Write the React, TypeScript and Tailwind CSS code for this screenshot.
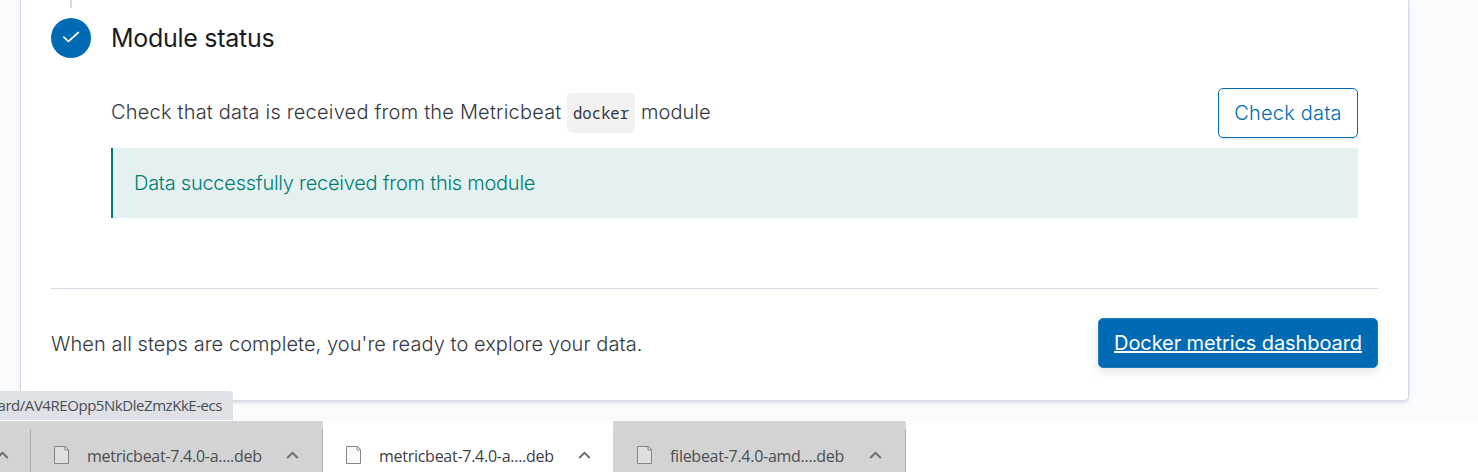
import React from "react";

const FileIcon = () => (
  <svg width="16" height="19" viewBox="0 0 16 19" className="shrink-0" fill="none">
    <path d="M.5.5H11.5L14.5 3.5V17.5H.5Z" fill="#eef2f5" fillOpacity=".4" stroke="#858585" />
    <path d="M11 .5V4H14.5" stroke="#858585" />
  </svg>
);

const Chevron = () => (
  <svg width="13" height="8" viewBox="0 0 13 8" className="shrink-0" fill="none">
    <path d="M1.2 7L6.5 1.8L11.8 7" stroke="#6b6e72" strokeWidth="2" />
  </svg>
);

function Download({ name, width, active = false }: { name: string; width: string; active?: boolean }) {
  return (
    <div className={`flex h-full shrink-0 flex-col ${width} ${active ? "bg-white" : "bg-[#d3d3d3]"}`}>
      <div className="h-2 w-full border-r border-[#dedede]" />
      <div className={`flex w-full flex-1 items-start border-r pl-[23px] ${active ? "border-[#d3d3d3]" : "border-[#adadad]"}`}>
        <div className="pt-[17px]"><FileIcon /></div>
        <div className={`ml-[17px] w-[178px] whitespace-nowrap pt-[16px] font-['Open_Sans',sans-serif] text-[16px] leading-[22px] tracking-[-0.27px] ${active ? "text-[#3c4043]" : "text-[#4b4e52]"}`}>{name}</div>
        <div className="ml-[21px] pt-[22px]"><Chevron /></div>
      </div>
    </div>
  );
}

export default function App() {
  return (
    <div className="flex h-[472px] w-[1478px] flex-col overflow-hidden bg-white font-['Inter',sans-serif] text-[20px] font-light leading-[30px] tracking-[0.06px] text-[#343741]">
      <main className="relative h-[421px] shrink-0 bg-[#fafbfd]">
        <section className="ml-5 flex h-[401px] w-[1389px] flex-col rounded-b-[5px] border border-t-0 border-[#d3dae6] bg-white px-[30px] shadow-[0_2px_3px_rgba(152,162,179,0.3)]">
          <div className="ml-[19px] h-2 w-[2px] shrink-0 bg-[#d3dae6]" />
          <div className="mt-[10px] flex h-10 shrink-0 items-center gap-5">
            <div className="flex size-10 items-center justify-center rounded-full bg-[#006bb4]">
              <svg width="20" height="20" viewBox="0 0 20 20" fill="none">
                <path d="M2.8 9.2L7.5 13.3L17.3 4.5" stroke="#fff" strokeWidth="1.7" strokeLinecap="round" strokeLinejoin="round" />
              </svg>
            </div>
            <h2 className="text-[25px] font-normal leading-10 tracking-[-0.28px] text-[#1a1c21]">Module status</h2>
          </div>
          <div className="ml-[60px] mt-[30px] flex h-[50px] w-[1247px] shrink-0 items-center justify-between">
            <div className="flex items-center whitespace-pre">
              <span className="-mt-[2px] w-[450px] tracking-[0.2px]">Check that data is received from the Metricbeat</span>
              <code className="ml-[6px] mr-[6px] flex h-10 w-[68px] items-center justify-center rounded-[5px] bg-[#f2f2f2] font-['Noto_Sans_Mono','DejaVu_Sans_Mono',monospace] text-[15.6px] font-normal tracking-normal">docker</code>
              <span className="-mt-[2px]">module</span>
            </div>
            <button className="h-[50px] w-[140px] rounded-[5px] border border-[#006bb4] tracking-[0.2px] text-[#006bb4] shadow-[0_2px_2px_-1px_rgba(152,162,179,0.3)]">Check data</button>
          </div>
          <div className="ml-[60px] mt-[10px] flex h-[70px] w-[1247px] shrink-0 items-center border-l-2 border-[#017d73] bg-[#e5f1f0] pl-[21px] tracking-[-0.25px] text-[#017d73]">
            Data successfully received from this module
          </div>
          <div className="mt-[70px] h-px shrink-0 bg-[#d3dae6]" />
          <div className="mt-[29px] flex h-[50px] shrink-0 items-center justify-between">
            <span className="pt-[2px]">When all steps are complete, you're ready to explore your data.</span>
            <button className="h-[50px] w-[280px] rounded-[5px] border border-[#207dbd] bg-[#006bb4] font-normal tracking-[-0.1px] text-white underline shadow-[0_4px_8px_rgba(65,78,101,0.15)]">Docker metrics dashboard</button>
          </div>
        </section>
        <div className="absolute bottom-px left-0 flex h-[29px] w-[233px] items-center justify-end overflow-hidden rounded-tr-[4px] bg-[#dee1e6] pr-[11px] pb-[1px] font-['Open_Sans',sans-serif] text-[15px] font-normal tracking-[-0.45px] text-[#4b4e52]">
          <span className="whitespace-nowrap">ard/AV4REOpp5NkDleZmzKkE-ecs</span>
        </div>
      </main>
      <footer className="flex h-[51px] shrink-0 font-normal">
        <div className="flex w-[31px] shrink-0 flex-col bg-[#d3d3d3]">
          <div className="h-2" />
          <div className="flex flex-1 items-start border-r border-[#adadad] pt-[22px]">
            <div className="-ml-[4px]"><Chevron /></div>
          </div>
        </div>
        <Download name="metricbeat-7.4.0-a....deb" width="w-[292px]" />
        <Download name="metricbeat-7.4.0-a....deb" width="w-[291px]" active />
        <Download name="filebeat-7.4.0-amd....deb" width="w-[292px]" />
      </footer>
    </div>
  );
}
